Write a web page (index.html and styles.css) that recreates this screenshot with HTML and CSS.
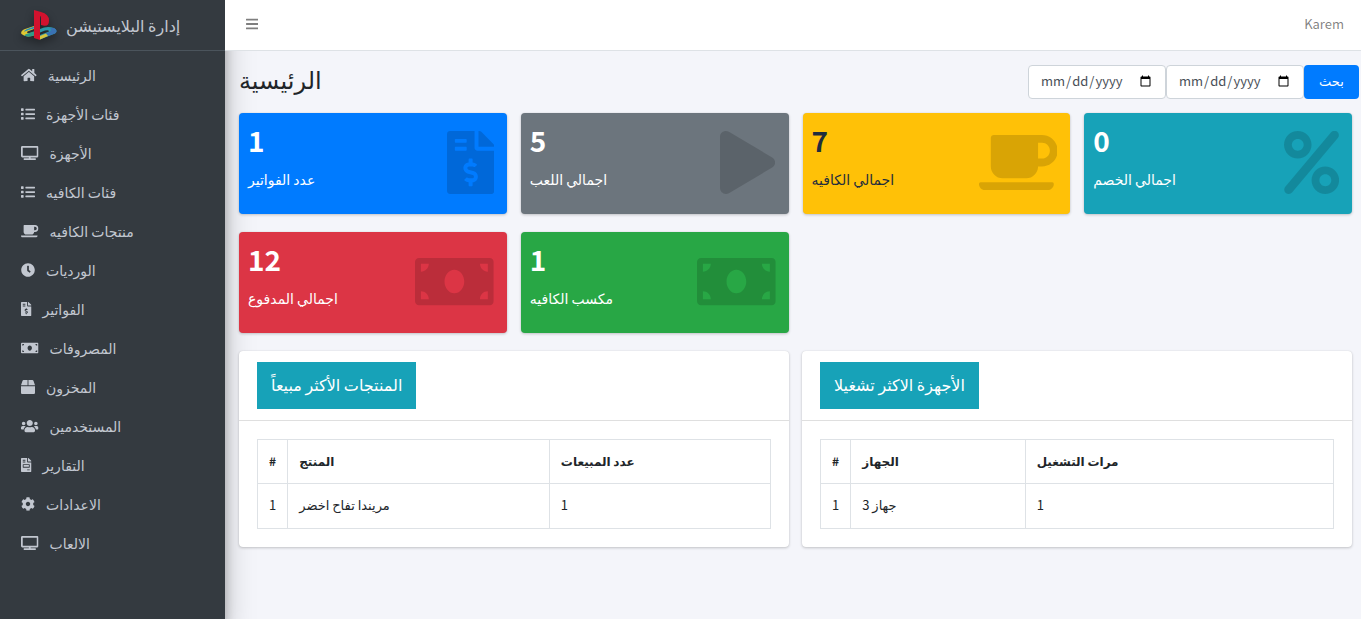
FILE: index.html
```html
<!DOCTYPE html>
<html lang="ar">
<head>
    <meta charset="UTF-8">
    <meta name="viewport" content="width=device-width, initial-scale=1.0">
    <title>إدارة البلايستيشن</title>
    <link rel="stylesheet" href="styles.css">
</head>
<body>

<!-- Icons -->
<svg class="sprite" aria-hidden="true">
    <symbol id="home" viewBox="0 0 576 512"><path d="M280.37 148.26L96 300.11V464a16 16 0 0 0 16 16l112.06-.29a16 16 0 0 0 15.92-16V368a16 16 0 0 1 16-16h64a16 16 0 0 1 16 16v95.64a16 16 0 0 0 16 16.05L464 480a16 16 0 0 0 16-16V300L295.67 148.26a12.19 12.19 0 0 0-15.3 0zM571.6 251.47L488 182.56V44.05a12 12 0 0 0-12-12h-56a12 12 0 0 0-12 12v72.61L318.47 43a48 48 0 0 0-61 0L4.34 251.47a12 12 0 0 0-1.6 16.9l25.5 31A12 12 0 0 0 45.15 301l235.22-193.74a12.19 12.19 0 0 1 15.3 0L530.9 301a12 12 0 0 0 16.9-1.6l25.5-31a12 12 0 0 0-1.7-16.93z"/></symbol>
    <symbol id="list" viewBox="0 0 512 512"><path d="M80 368H16a16 16 0 0 0-16 16v64a16 16 0 0 0 16 16h64a16 16 0 0 0 16-16v-64a16 16 0 0 0-16-16zm0-320H16A16 16 0 0 0 0 64v64a16 16 0 0 0 16 16h64a16 16 0 0 0 16-16V64a16 16 0 0 0-16-16zm0 160H16a16 16 0 0 0-16 16v64a16 16 0 0 0 16 16h64a16 16 0 0 0 16-16v-64a16 16 0 0 0-16-16zm416 176H176a16 16 0 0 0-16 16v32a16 16 0 0 0 16 16h320a16 16 0 0 0 16-16v-32a16 16 0 0 0-16-16zm0-320H176a16 16 0 0 0-16 16v32a16 16 0 0 0 16 16h320a16 16 0 0 0 16-16V80a16 16 0 0 0-16-16zm0 160H176a16 16 0 0 0-16 16v32a16 16 0 0 0 16 16h320a16 16 0 0 0 16-16v-32a16 16 0 0 0-16-16z"/></symbol>
    <symbol id="tv" viewBox="0 0 640 512"><path d="M592 0H48A48 48 0 0 0 0 48v320a48 48 0 0 0 48 48h240v32H112a16 16 0 0 0-16 16v32a16 16 0 0 0 16 16h416a16 16 0 0 0 16-16v-32a16 16 0 0 0-16-16H352v-32h240a48 48 0 0 0 48-48V48a48 48 0 0 0-48-48zm-16 352H64V64h512v288z"/></symbol>
    <symbol id="coffee" viewBox="0 0 640 512"><path d="M192 384h192c53 0 96-43 96-96h32c70.6 0 128-57.4 128-128S582.6 32 512 32H120c-13.3 0-24 10.7-24 24v232c0 53 43 96 96 96zM512 96c35.3 0 64 28.7 64 64s-28.7 64-64 64h-32V96h32zm47.7 384H48.3c-47.6 0-61-64-36-64h583.3c25 0 11.8 64-35.9 64z"/></symbol>
    <symbol id="clock" viewBox="0 0 512 512"><path d="M256,8C119,8,8,119,8,256S119,504,256,504,504,393,504,256,393,8,256,8Zm92.49,313h0l-20,25a16,16,0,0,1-22.49,2.5h0l-67-49.72a40,40,0,0,1-15-31.23V112a16,16,0,0,1,16-16h32a16,16,0,0,1,16,16V256l58,42.5A16,16,0,0,1,348.49,321Z"/></symbol>
    <symbol id="invoice-dollar" viewBox="0 0 384 512"><path d="M377 105L279.1 7c-4.5-4.5-10.6-7-17-7H256v128h128v-6.1c0-6.3-2.5-12.4-7-16.9zm-153 31V0H24C10.7 0 0 10.7 0 24v464c0 13.3 10.7 24 24 24h336c13.3 0 24-10.7 24-24V160H248c-13.2 0-24-10.8-24-24zM64 72c0-4.42 3.58-8 8-8h80c4.42 0 8 3.58 8 8v16c0 4.42-3.58 8-8 8H72c-4.42 0-8-3.58-8-8V72zm0 80v-16c0-4.42 3.58-8 8-8h80c4.42 0 8 3.58 8 8v16c0 4.42-3.58 8-8 8H72c-4.42 0-8-3.58-8-8zm144 263.88V440c0 4.42-3.58 8-8 8h-16c-4.42 0-8-3.58-8-8v-24.29c-11.29-.58-22.27-4.52-31.37-11.35-3.9-2.93-4.1-8.77-.57-12.14l11.75-11.21c2.77-2.64 6.89-2.76 10.13-.73 3.87 2.42 8.26 3.72 12.82 3.72h28.11c6.5 0 11.8-5.92 11.8-13.19 0-5.95-3.61-11.19-8.77-12.73l-45-13.5c-18.59-5.58-31.58-23.42-31.58-43.39 0-24.52 19.05-44.44 42.67-45.07V232c0-4.42 3.58-8 8-8h16c4.42 0 8 3.58 8 8v24.29c11.29.58 22.27 4.51 31.37 11.35 3.9 2.93 4.1 8.77.57 12.14l-11.75 11.21c-2.77 2.64-6.89 2.76-10.13.73-3.87-2.43-8.26-3.72-12.82-3.72h-28.11c-6.5 0-11.8 5.92-11.8 13.19 0 5.95 3.61 11.19 8.77 12.73l45 13.5c18.59 5.58 31.58 23.42 31.58 43.39 0 24.53-19.05 44.44-42.67 45.07z"/></symbol>
    <symbol id="invoice" viewBox="0 0 384 512"><path d="M288 256H96v64h192v-64zm89-151L279.1 7c-4.5-4.5-10.6-7-17-7H256v128h128v-6.1c0-6.3-2.5-12.4-7-16.9zm-153 31V0H24C10.7 0 0 10.7 0 24v464c0 13.3 10.7 24 24 24h336c13.3 0 24-10.7 24-24V160H248c-13.2 0-24-10.8-24-24zM64 72c0-4.42 3.58-8 8-8h80c4.42 0 8 3.58 8 8v16c0 4.42-3.58 8-8 8H72c-4.42 0-8-3.58-8-8V72zm0 64c0-4.42 3.58-8 8-8h80c4.42 0 8 3.58 8 8v16c0 4.42-3.58 8-8 8H72c-4.42 0-8-3.58-8-8v-16zm256 304c0 4.42-3.58 8-8 8h-80c-4.42 0-8-3.58-8-8v-16c0-4.42 3.58-8 8-8h80c4.42 0 8 3.58 8 8v16zm0-200v96c0 8.84-7.16 16-16 16H80c-8.84 0-16-7.16-16-16v-96c0-8.84 7.16-16 16-16h224c8.84 0 16 7.16 16 16z"/></symbol>
    <symbol id="money" viewBox="0 0 640 512"><path d="M608 64H32C14.33 64 0 78.33 0 96v320c0 17.67 14.33 32 32 32h576c17.67 0 32-14.33 32-32V96c0-17.67-14.33-32-32-32zM48 400v-64c35.35 0 64 28.65 64 64H48zm0-224v-64h64c0 35.35-28.65 64-64 64zm272 176c-44.19 0-80-42.99-80-96 0-53.02 35.82-96 80-96s80 42.98 80 96c0 53.03-35.83 96-80 96zm272 48h-64c0-35.35 28.65-64 64-64v64zm0-224c-35.35 0-64-28.65-64-64h64v64z"/></symbol>
    <symbol id="box" viewBox="0 0 512 512"><path d="M509.5 184.6L458.9 32.8C452.4 13.2 434.1 0 413.4 0H272v192h238.7c-.4-2.5-.4-5-1.2-7.4zM240 0H98.6c-20.7 0-39 13.2-45.5 32.8L2.5 184.6c-.8 2.4-.8 4.9-1.2 7.4H240V0zM0 224v240c0 26.5 21.5 48 48 48h416c26.5 0 48-21.5 48-48V224H0z"/></symbol>
    <symbol id="users" viewBox="0 0 640 512"><path d="M96 224c35.3 0 64-28.7 64-64s-28.7-64-64-64-64 28.7-64 64 28.7 64 64 64zm448 0c35.3 0 64-28.7 64-64s-28.7-64-64-64-64 28.7-64 64 28.7 64 64 64zm32 32h-64c-17.6 0-33.5 7.1-45.1 18.6 40.3 22.1 68.9 62 75.1 109.4h66c17.7 0 32-14.3 32-32v-32c0-35.3-28.7-64-64-64zm-256 0c61.9 0 112-50.1 112-112S381.9 32 320 32 208 82.1 208 144s50.1 112 112 112zm76.8 32h-8.3c-20.8 10-43.9 16-68.5 16s-47.6-6-68.5-16h-8.3C179.6 288 128 339.6 128 403.2V432c0 26.5 21.5 48 48 48h288c26.5 0 48-21.5 48-48v-28.8c0-63.6-51.6-115.2-115.2-115.2zm-223.7-13.4C161.5 263.1 145.6 256 128 256H64c-35.3 0-64 28.7-64 64v32c0 17.7 14.3 32 32 32h65.9c6.3-47.4 34.9-87.3 75.2-109.4z"/></symbol>
    <symbol id="cog" viewBox="0 0 512 512"><path d="M487.4 315.7l-42.6-24.6c4.3-23.2 4.3-47 0-70.2l42.6-24.6c4.9-2.8 7.1-8.6 5.5-14-11.1-35.6-30-67.8-54.7-94.6-3.8-4.1-10-5.1-14.8-2.3L380.8 110c-17.9-15.4-38.5-27.3-60.8-35.1V25.8c0-5.6-3.9-10.5-9.4-11.7-36.7-8.2-74.3-7.8-109.2 0-5.5 1.2-9.4 6.1-9.4 11.7V75c-22.2 7.9-42.8 19.8-60.8 35.1L88.7 85.5c-4.9-2.8-11-1.9-14.8 2.3-24.7 26.7-43.6 58.9-54.7 94.6-1.7 5.4.6 11.2 5.5 14L67.3 221c-4.3 23.2-4.3 47 0 70.2l-42.6 24.6c-4.9 2.8-7.1 8.6-5.5 14 11.1 35.6 30 67.8 54.7 94.6 3.8 4.1 10 5.1 14.8 2.3l42.6-24.6c17.9 15.4 38.5 27.3 60.8 35.1v49.2c0 5.6 3.9 10.5 9.4 11.7 36.7 8.2 74.3 7.8 109.2 0 5.5-1.2 9.4-6.1 9.4-11.7v-49.2c22.2-7.9 42.8-19.8 60.8-35.1l42.6 24.6c4.9 2.8 11 1.9 14.8-2.3 24.7-26.7 43.6-58.9 54.7-94.6 1.5-5.5-.7-11.3-5.6-14.1zM256 336c-44.1 0-80-35.9-80-80s35.9-80 80-80 80 35.9 80 80-35.9 80-80 80z"/></symbol>
    <symbol id="play" viewBox="0 0 448 512"><path d="M424.4 214.7L72.4 6.6C43.8-10.3 0 6.1 0 47.9V464c0 37.5 40.7 60.1 72.4 41.3l352-208c31.4-18.5 31.5-64.1 0-82.6z"/></symbol>
    <symbol id="percent" viewBox="0 0 448 512"><path d="M112 224c61.9 0 112-50.1 112-112S173.9 0 112 0 0 50.1 0 112s50.1 112 112 112zm0-160c26.5 0 48 21.5 48 48s-21.5 48-48 48-48-21.5-48-48 21.5-48 48-48zm224 224c-61.9 0-112 50.1-112 112s50.1 112 112 112 112-50.1 112-112-50.1-112-112-112zm0 160c-26.5 0-48-21.5-48-48s21.5-48 48-48 48 21.5 48 48-21.5 48-48 48z"/><path d="M38 476L410 34" fill="none" stroke="currentColor" stroke-width="72" stroke-linecap="round"/></symbol>
</svg>

<aside class="sidebar">
    <a class="brand" href="#">
        <svg class="brand-logo" viewBox="0 0 36 31" aria-hidden="true">
            <path d="M13 16L4 19Q-1 21 0.500 24Q4 27.500 11 26L14 25V22L9 23Q5 23.500 6.500 21.500L13 19Z" fill="#e0c832"/>
            <path d="M3 25.500Q7 28 14 25V21L8 23Q4 24 3 25.500Z" fill="#2f9a8a"/>
            <path d="M13 16.500L6 19Q3 20.500 3 22Q5 20.500 13 18.500Z" fill="#2b8fb5"/>
            <path d="M19 19Q26 15.500 33 18Q37.500 20.500 34 23.500L19 29.500V25L28 21.500Q28 19.500 24 20.500L19 22.500Z" fill="#2b98a8"/>
            <path d="M24 24L29 21.500Q31 20 29 18L33 18Q37.500 20.500 34 23.500L27 26Z" fill="#3a72b4"/>
            <path d="M19 26L25 23.500L27 26L19 29.500Z" fill="#d8c43a"/>
            <path d="M13 0L20 2Q28 4 28 10.500Q28 17 22 15.500L20 15V8Q20 6 19 6V30L13 28Z" fill="#d2122e"/>
        </svg>
        <span>إدارة البلايستيشن</span>
    </a>
    <nav class="side-nav">
        <a href="#"><svg viewBox="0 0 576 512"><use href="#home"/></svg>الرئيسية</a>
        <a href="#"><svg viewBox="0 0 512 512"><use href="#list"/></svg>فئات الأجهزة</a>
        <a href="#"><svg viewBox="0 0 640 512"><use href="#tv"/></svg>الأجهزة</a>
        <a href="#"><svg viewBox="0 0 512 512"><use href="#list"/></svg>فئات الكافيه</a>
        <a href="#"><svg viewBox="0 0 640 512"><use href="#coffee"/></svg>منتجات الكافيه</a>
        <a href="#"><svg viewBox="0 0 512 512"><use href="#clock"/></svg>الورديات</a>
        <a href="#"><svg viewBox="0 0 384 512"><use href="#invoice-dollar"/></svg>الفواتير</a>
        <a href="#"><svg viewBox="0 0 640 512"><use href="#money"/></svg>المصروفات</a>
        <a href="#"><svg viewBox="0 0 512 512"><use href="#box"/></svg>المخزون</a>
        <a href="#"><svg viewBox="0 0 640 512"><use href="#users"/></svg>المستخدمين</a>
        <a href="#"><svg viewBox="0 0 384 512"><use href="#invoice"/></svg>التقارير</a>
        <a href="#"><svg viewBox="0 0 512 512"><use href="#cog"/></svg>الاعدادات</a>
        <a href="#"><svg viewBox="0 0 640 512"><use href="#tv"/></svg>الالعاب</a>
    </nav>
</aside>

<div class="wrapper">
    <header class="navbar">
        <button type="button" class="menu-toggle" aria-label="القائمة">
            <svg viewBox="0 0 448 512"><path d="M16 132h416a16 16 0 0 0 16-16V76a16 16 0 0 0-16-16H16A16 16 0 0 0 0 76v40a16 16 0 0 0 16 16zm0 160h416a16 16 0 0 0 16-16v-40a16 16 0 0 0-16-16H16a16 16 0 0 0-16 16v40a16 16 0 0 0 16 16zm0 160h416a16 16 0 0 0 16-16v-40a16 16 0 0 0-16-16H16a16 16 0 0 0-16 16v40a16 16 0 0 0 16 16z"/></svg>
        </button>
        <a class="user" href="#">Karem</a>
    </header>

    <main>
        <div class="page-header">
            <h1>الرئيسية</h1>
            <form class="filter">
                <input type="date" name="from" aria-label="من تاريخ">
                <input type="date" name="to" aria-label="إلى تاريخ">
                <button type="submit">بحث</button>
            </form>
        </div>

        <!-- Totals -->
        <section class="stats">
            <div class="small-box primary">
                <h3>1</h3>
                <p>عدد الفواتير</p>
                <svg viewBox="0 0 384 512"><use href="#invoice-dollar"/></svg>
            </div>
            <div class="small-box secondary">
                <h3>5</h3>
                <p>اجمالي اللعب</p>
                <svg viewBox="0 0 448 512"><use href="#play"/></svg>
            </div>
            <div class="small-box warning">
                <h3>7</h3>
                <p>اجمالي الكافيه</p>
                <svg viewBox="0 0 640 512"><use href="#coffee"/></svg>
            </div>
            <div class="small-box info">
                <h3>0</h3>
                <p>اجمالي الخصم</p>
                <svg viewBox="0 0 448 512"><use href="#percent"/></svg>
            </div>
            <div class="small-box danger">
                <h3>12</h3>
                <p>اجمالي المدفوع</p>
                <svg viewBox="0 0 640 512"><use href="#money"/></svg>
            </div>
            <div class="small-box success">
                <h3>1</h3>
                <p>مكسب الكافيه</p>
                <svg viewBox="0 0 640 512"><use href="#money"/></svg>
            </div>
        </section>

        <!-- Top lists -->
        <section class="cards">
            <div class="card">
                <div class="card-header"><h2>المنتجات الأكثر مبيعاً</h2></div>
                <div class="card-body">
                    <table>
                        <thead>
                            <tr><th class="num">#</th><th class="product">المنتج</th><th>عدد المبيعات</th></tr>
                        </thead>
                        <tbody>
                            <tr><td>1</td><td>مريندا تفاح اخضر</td><td>1</td></tr>
                        </tbody>
                    </table>
                </div>
            </div>
            <div class="card">
                <div class="card-header"><h2>الأجهزة الاكثر تشغيلا</h2></div>
                <div class="card-body">
                    <table>
                        <thead>
                            <tr><th class="num">#</th><th class="device">الجهاز</th><th>مرات التشغيل</th></tr>
                        </thead>
                        <tbody>
                            <tr><td>1</td><td>جهاز 3</td><td>1</td></tr>
                        </tbody>
                    </table>
                </div>
            </div>
        </section>
    </main>
</div>

</body>
</html>
```

FILE: styles.css
```css
* {
    box-sizing: border-box;
}

body {
    margin: 0;
    display: flex;
    min-height: 100vh;
    background: #f4f5fa;
    color: #212529;
    font-family: "Noto Sans CJK SC", "DejaVu Sans", sans-serif;
    font-size: 13px;
    line-height: 22px;
}

h1, h2, h3, p {
    margin: 0;
}

a {
    color: inherit;
    text-decoration: none;
}

svg {
    fill: currentColor;
}

.sprite {
    display: none;
}

/* Sidebar */
.sidebar {
    flex: none;
    width: 225px;
    background: #343a40;
    color: #c2c7d0;
    box-shadow: 0 14px 28px rgba(0, 0, 0, .25), 0 10px 10px rgba(0, 0, 0, .22);
}

.brand {
    display: flex;
    align-items: center;
    gap: 9px;
    height: 51px;
    padding-left: 21px;
    border-bottom: 1px solid #4b545c;
    font-size: 16px;
}

.brand-logo {
    width: 36px;
    height: 31px;
    filter: drop-shadow(0 4px 4px rgba(0, 0, 0, .4));
}

.side-nav {
    display: flex;
    flex-direction: column;
    padding-top: 4px;
    font-size: 14px;
}

.side-nav a {
    display: flex;
    align-items: center;
    gap: 11px;
    height: 39px;
    padding-left: 21px;
}

.side-nav svg {
    height: 14px;
}

/* Top bar */
.wrapper {
    flex: 1;
    min-width: 0;
}

.navbar {
    position: relative;
    display: flex;
    align-items: center;
    justify-content: space-between;
    height: 51px;
    padding: 0 17px 2px 21px;
    background: #fff;
    border-bottom: 1px solid #dee2e6;
    color: rgba(0, 0, 0, .5);
}

.menu-toggle {
    display: flex;
    padding: 0;
    border: 0;
    background: none;
    color: inherit;
}

.menu-toggle svg {
    height: 14px;
}

.page-header {
    display: flex;
    justify-content: space-between;
    padding: 14px 2px 14px 14px;
}

h1 {
    font-size: 24px;
    font-weight: 400;
    line-height: 28px;
}

.filter {
    display: flex;
}

.filter input,
.filter button {
    height: 34px;
    border-radius: 4px;
    font: inherit;
}

.filter input {
    width: 138px;
    padding: 0 11px 2px;
    border: 1px solid #ced4da;
    background: #fff;
    color: #495057;
}

.filter button {
    width: 55px;
    padding: 0 0 2px;
    border: 0;
    background: #007bff;
    color: #fff;
}

/* Boxes */
.stats {
    display: grid;
    grid-template-columns: repeat(4, 1fr);
    gap: 18px 14px;
    padding: 0 9px 18px 14px;
}

.small-box {
    position: relative;
    height: 101px;
    padding: 9px;
    border-radius: 4px;
    box-shadow: 0 0 1px rgba(0, 0, 0, .13), 0 1px 3px rgba(0, 0, 0, .2);
    color: #fff;
}

.small-box h3 {
    margin-bottom: 10px;
    font-size: 28px;
    font-weight: 700;
    line-height: 36px;
}

.small-box p {
    font-size: 14px;
}

.small-box svg {
    position: absolute;
    top: 18px;
    right: 13px;
    height: 63px;
    color: rgba(0, 0, 0, .15);
}

.primary { background: #007bff; }
.secondary { background: #6c757d; }
.warning { background: #ffc107; color: #1f2d3d; }
.info { background: #17a2b8; }
.danger { background: #dc3545; }
.success { background: #28a745; }

/* Cards */
.cards {
    display: grid;
    grid-template-columns: 1fr 1fr;
    gap: 13px;
    padding: 0 9px 18px 14px;
}

.card {
    background: #fff;
    border-radius: 4px;
    box-shadow: 0 0 1px rgba(0, 0, 0, .13), 0 1px 3px rgba(0, 0, 0, .2);
}

.card-header {
    display: flex;
    padding: 11px 18px;
    border-bottom: 1px solid #dfdfdf;
}

.card-header h2 {
    padding: 0 14px 2px;
    background: #17a2b8;
    color: #fff;
    font-size: 16px;
    font-weight: 400;
    line-height: 45px;
}

.card-body {
    padding: 18px;
}

table {
    width: 100%;
    border-collapse: collapse;
}

th, td {
    padding: 10px 11px 12px;
    border: 1px solid #dee2e6;
    text-align: left;
}

th {
    font-size: 12px;
    line-height: 21px;
}

.num { width: 30px; }
.product { width: 51%; }
.device { width: 34%; }
```
